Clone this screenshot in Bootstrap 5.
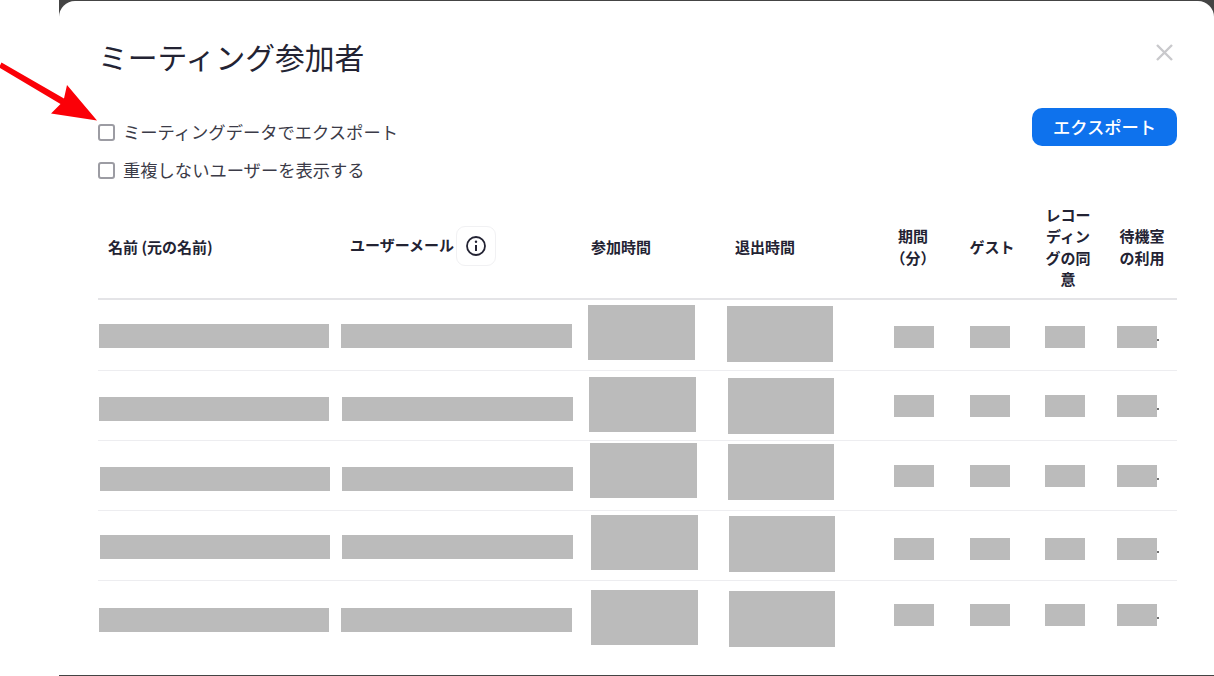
<!DOCTYPE html>
<html lang="ja">
<head>
<meta charset="utf-8">
<title>ミーティング参加者</title>
<link href="https://cdn.jsdelivr.net/npm/bootstrap@5.3.0/dist/css/bootstrap.min.css" rel="stylesheet">
<style>
html,body{height:100%;margin:0;background:#fff;overflow:hidden}
body{font-family:"Noto Sans CJK JP","Noto Sans",sans-serif;color:#232333}
.stage{height:676px;width:1214px;padding-left:59px;position:relative}
.dim{height:676px;background:#444;padding:1px 0}
.sheet{height:674px;background:#fff;border-radius:16px 16px 0 0;padding:0 37px 0 39px;position:relative}
.head-row{height:107px;padding-top:33px}
.ttl{font-size:29.8px;line-height:44px;font-weight:400;margin:0;color:#232333}
.shut{position:absolute;left:1096px;top:42px;width:19px;height:19px;display:block;padding:0;border:0;background:none;margin-top:-5px}
.opts{height:91px}
.opt{display:flex;align-items:center;gap:8px;font-size:17.3px;line-height:24px;color:#3b3b48;margin:0;height:24px}
.opt+.opt{margin-top:14px}
.opt input{appearance:none;width:17px;height:17px;border:2px solid #9c9ca3;border-radius:3px;background:#fff;margin:0;flex:none}
.optwrap{padding-top:12px}
.go{width:145px;height:38px;padding:0;font-size:17.3px;line-height:24px;font-weight:500;border:0;border-radius:10px;background:#0e72ed;color:#fff}
.grid-t{width:1079px;table-layout:fixed;border-collapse:collapse;margin:0}
.grid-t th{height:100px;padding:0 0 4px;font-size:15px;line-height:21.3px;font-weight:700;color:#232333;vertical-align:middle;border-bottom:2px solid #e4e4e7}
.grid-t td{padding:0;height:70px;vertical-align:top;border-bottom:1px solid #ededf0}
.grid-t tr.first td{height:71px}
.grid-t tr:last-child td{border-bottom:0}
.c1{width:242px;padding-left:10px!important}
.c2{width:241px;padding-left:10px!important}
.c3{width:144px;padding-left:10px!important}
.c4{width:146px;padding-left:10px!important}
.c5{width:84px;text-align:center}
.c6{width:74px;text-align:center}
.c7{width:78px;text-align:center}
.c8{width:70px;text-align:center}
.mailwrap{display:flex;align-items:center;gap:2px;margin-top:-2px}
.mailwrap>span:first-child{margin-top:-2px}
.tipbtn{width:40px;height:40px;border:1px solid #f1f1f3;border-radius:9px;background:#fff;display:flex;align-items:center;justify-content:center;padding:0}
.rd{display:block;background:#bbb}
.rd-n{width:230px;height:24px;margin:var(--nt) 0 0 var(--nl)}
.rd-m{width:231px;height:24px;margin:var(--nt) 0 0 var(--ml)}
.rd-j{width:107px;height:55px;margin:var(--jt) 0 0 var(--jl)}
.rd-l{width:106px;height:56px;margin:var(--jt2) 0 0 var(--ll)}
.rd-s{width:40px;height:22px;margin:var(--st) 0 0}
.c5 .rd-s{margin-left:23px}
.c6 .rd-s{margin-left:15px}
.c7 .rd-s{margin-left:16px}
.c8 .rd-s{margin-left:10px}
.cellflex{display:flex;align-items:flex-end}
.speck{width:2px;height:2px;background:#444;border-radius:50%;margin:0 0 7px 0;display:block}
.r1{--nt:24px;--nl:1px;--ml:1px;--jt:5px;--jl:7px;--jt2:6px;--ll:2px;--st:26px}
.r2{--nt:26px;--nl:1px;--ml:2px;--jt:6px;--jl:8px;--jt2:7px;--ll:3px;--st:24px}
.r3{--nt:26px;--nl:2px;--ml:2px;--jt:2px;--jl:9px;--jt2:3px;--ll:3px;--st:24px}
.r4{--nt:24px;--nl:2px;--ml:2px;--jt:4px;--jl:10px;--jt2:5px;--ll:4px;--st:27px}
.r5{--nt:27px;--nl:1px;--ml:1px;--jt:9px;--jl:10px;--jt2:10px;--ll:4px;--st:23px}
.pointer{position:absolute;left:0;top:60px;width:100px;height:64px}
</style>
</head>
<body>
<div class="stage">
  <div class="dim">
    <div class="sheet">
      <div class="head-row"><h1 class="ttl">ミーティング参加者</h1></div>
      <button class="shut" type="button" aria-label="閉じる">
        <svg width="19" height="19" viewBox="0 0 19 19"><path d="M2 2L17 17M17 2L2 17" stroke="#c9c9cc" stroke-width="2.4" fill="none"/></svg>
      </button>
      <div class="opts d-flex justify-content-between align-items-start">
        <div class="optwrap">
          <label class="opt"><input type="checkbox"><span>ミーティングデータでエクスポート</span></label>
          <label class="opt"><input type="checkbox"><span>重複しないユーザーを表示する</span></label>
        </div>
        <button class="btn go" type="button">エクスポート</button>
      </div>
      <table class="grid-t">
        <thead>
          <tr>
            <th class="c1">名前 (元の名前)</th>
            <th class="c2"><div class="mailwrap"><span>ユーザーメール</span><span class="tipbtn"><svg width="22" height="22" viewBox="0 0 22 22"><circle cx="11" cy="11" r="9" fill="none" stroke="#232333" stroke-width="1.8"/><path d="M11 10v6" stroke="#232333" stroke-width="2"/><circle cx="11" cy="6.8" r="1.2" fill="#232333"/></svg></span></div></th>
            <th class="c3">参加時間</th>
            <th class="c4">退出時間</th>
            <th class="c5">期間<br>（分）</th>
            <th class="c6">ゲスト</th>
            <th class="c7">レコー<br>ディン<br>グの同<br>意</th>
            <th class="c8">待機室<br>の利用</th>
          </tr>
        </thead>
        <tbody>
          <tr class="r1 first"><td><i class="rd rd-n"></i></td><td><i class="rd rd-m"></i></td><td><i class="rd rd-j"></i></td><td><i class="rd rd-l"></i></td><td class="c5"><i class="rd rd-s"></i></td><td class="c6"><i class="rd rd-s"></i></td><td class="c7"><i class="rd rd-s"></i></td><td class="c8"><div class="cellflex"><i class="rd rd-s"></i><i class="speck"></i></div></td></tr>
          <tr class="r2"><td><i class="rd rd-n"></i></td><td><i class="rd rd-m"></i></td><td><i class="rd rd-j"></i></td><td><i class="rd rd-l"></i></td><td class="c5"><i class="rd rd-s"></i></td><td class="c6"><i class="rd rd-s"></i></td><td class="c7"><i class="rd rd-s"></i></td><td class="c8"><div class="cellflex"><i class="rd rd-s"></i><i class="speck"></i></div></td></tr>
          <tr class="r3"><td><i class="rd rd-n"></i></td><td><i class="rd rd-m"></i></td><td><i class="rd rd-j"></i></td><td><i class="rd rd-l"></i></td><td class="c5"><i class="rd rd-s"></i></td><td class="c6"><i class="rd rd-s"></i></td><td class="c7"><i class="rd rd-s"></i></td><td class="c8"><div class="cellflex"><i class="rd rd-s"></i><i class="speck"></i></div></td></tr>
          <tr class="r4"><td><i class="rd rd-n"></i></td><td><i class="rd rd-m"></i></td><td><i class="rd rd-j"></i></td><td><i class="rd rd-l"></i></td><td class="c5"><i class="rd rd-s"></i></td><td class="c6"><i class="rd rd-s"></i></td><td class="c7"><i class="rd rd-s"></i></td><td class="c8"><div class="cellflex"><i class="rd rd-s"></i><i class="speck"></i></div></td></tr>
          <tr class="r5"><td><i class="rd rd-n"></i></td><td><i class="rd rd-m"></i></td><td><i class="rd rd-j"></i></td><td><i class="rd rd-l"></i></td><td class="c5"><i class="rd rd-s"></i></td><td class="c6"><i class="rd rd-s"></i></td><td class="c7"><i class="rd rd-s"></i></td><td class="c8"><div class="cellflex"><i class="rd rd-s"></i><i class="speck"></i></div></td></tr>
        </tbody>
      </table>
    </div>
  </div>
  <svg class="pointer" viewBox="0 60 100 64" aria-hidden="true"><path d="M1.5 62.5L64 98.5L67 85L97 120.5L51 113.5L60.5 104L-1 67.5Z" fill="#fb0007"/></svg>
</div>
<script src="https://cdn.jsdelivr.net/npm/bootstrap@5.3.0/dist/js/bootstrap.bundle.min.js"></script>
</body>
</html>
